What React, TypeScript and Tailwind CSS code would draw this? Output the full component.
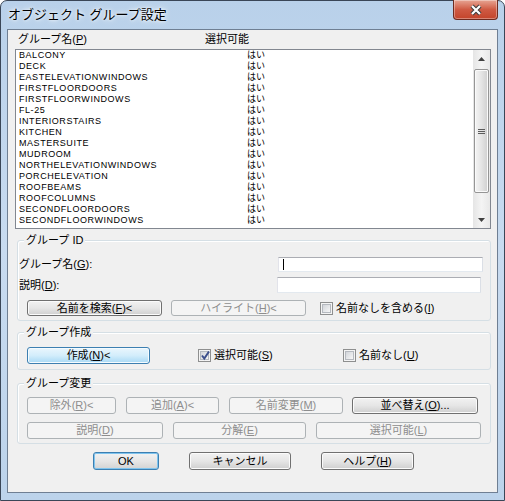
import React from "react";

const items = [
  "BALCONY",
  "DECK",
  "EASTELEVATIONWINDOWS",
  "FIRSTFLOORDOORS",
  "FIRSTFLOORWINDOWS",
  "FL-25",
  "INTERIORSTAIRS",
  "KITCHEN",
  "MASTERSUITE",
  "MUDROOM",
  "NORTHELEVATIONWINDOWS",
  "PORCHELEVATION",
  "ROOFBEAMS",
  "ROOFCOLUMNS",
  "SECONDFLOORDOORS",
  "SECONDFLOORWINDOWS",
];

type Kind = "normal" | "disabled" | "hot" | "default";

// mnemonic letter inside "(X)"
function Mn({ k }: { k: string }) {
  return (
    <>
      (<span className="underline underline-offset-[1px]">{k}</span>)
    </>
  );
}

function Btn({
  kind = "normal",
  className = "",
  children,
}: {
  kind?: Kind;
  className?: string;
  children: React.ReactNode;
}) {
  const look =
    kind === "disabled"
      ? "border-[#adb2b5] bg-[#f4f4f4] text-[#8d8d8d]"
      : kind === "hot"
        ? "border-[#3c7fb1] bg-linear-to-b from-[#eaf6fd] via-[#d3edfb] to-[#a7d9f5] text-black shadow-[inset_0_0_0_1px_#f4fbff]"
        : kind === "default"
          ? "border-[#3c7fb1] bg-linear-to-b from-[#f2f2f2] via-[#e6e6e6] to-[#d3d3d3] text-black shadow-[inset_0_0_0_1px_#7fc4ee]"
          : "border-[#707070] bg-linear-to-b from-[#f2f2f2] via-[#e6e6e6] to-[#cfcfcf] text-black shadow-[inset_0_0_0_1px_#fbfbfb]";
  return (
    <div
      className={`flex shrink-0 items-center justify-center rounded-[3px] border text-[11px] leading-[13px] ${look} ${className}`}
    >
      <span>{children}</span>
    </div>
  );
}

function Check({ checked = false }: { checked?: boolean }) {
  return (
    <span className="relative flex h-[13px] w-[13px] shrink-0 items-center justify-center border border-[#8e8f8f] bg-[#f4f4f4]">
      <span className="h-[9px] w-[9px] border border-[#b5b9bf] bg-linear-to-br from-[#d2d5da] to-[#f7f7f7]" />
      {checked && (
        <svg
          className="absolute left-[1px] top-[0px]"
          width="11"
          height="11"
          viewBox="0 0 11 11"
        >
          <path
            d="M2 5.5 L4.3 8.5 L9 1.5"
            fill="none"
            stroke="#3c4f8c"
            strokeWidth="2"
          />
        </svg>
      )}
    </span>
  );
}

function Input({ className = "", caret = false }: { className?: string; caret?: boolean }) {
  return (
    <div
      className={`flex shrink-0 items-center border border-[#abadb3] border-l-[#e2e3ea] border-r-[#dbdfe6] border-b-[#e3e9ef] bg-white pl-[4px] ${className}`}
    >
      {caret && <span className="h-[11px] w-[1px] bg-black" />}
    </div>
  );
}

function Group({
  title,
  className = "",
  children,
}: {
  title: string;
  className?: string;
  children: React.ReactNode;
}) {
  return (
    <div
      className={`relative ml-[9px] w-[474px] shrink-0 rounded-[3px] border border-[#d5dfe5] shadow-[inset_1px_1px_0_#ffffff] ${className}`}
    >
      <span className="absolute -top-[8px] left-[6px] bg-[#f0f0f0] px-[2px] text-[11px] leading-[14px]">
        {title}
      </span>
      {children}
    </div>
  );
}

function Arrow({ up }: { up?: boolean }) {
  return (
    <div className="flex h-[17px] items-center justify-center">
      <svg width="7" height="4" viewBox="0 0 7 4">
        <path d={up ? "M0 4 L3.5 0 L7 4 Z" : "M0 0 L7 0 L3.5 4 Z"} fill="#404040" />
      </svg>
    </div>
  );
}

export default function App() {
  return (
    <div className="h-[501px] w-[505px] font-['Liberation_Sans','Noto_Sans_CJK_JP',sans-serif] text-black">
      <div className="flex h-[501px] w-[505px] flex-col rounded-t-[7px] border border-[#3a4657] bg-linear-to-b from-[#b9d1ea] via-[#c8dbf0] to-[#bcd3eb] px-[6px] pb-[7px]">
        {/* title bar */}
        <div className="flex h-[28px] shrink-0 items-start justify-between">
          <div className="mt-[6px] pl-[1px] text-[13px] leading-[16px] [text-shadow:0_0_6px_#ffffff,0_0_3px_#ffffff]">
            オブジェクト グループ設定
          </div>
          <div className="-mt-[1px] flex h-[20px] w-[45px] items-center justify-center rounded-b-[4px] border border-t-0 border-[#6d2b20] bg-linear-to-b from-[#e6a493] via-[#cf5a43] to-[#c3432a] shadow-[inset_0_0_0_1px_rgba(255,255,255,0.35)]">
            <svg width="14" height="12" viewBox="0 0 14 12">
              <path d="M3 2 L11 10 M11 2 L3 10" stroke="#3b3b3b" strokeWidth="4.2" />
              <path d="M3 2 L11 10 M11 2 L3 10" stroke="#ffffff" strokeWidth="2.2" />
            </svg>
          </div>
        </div>

        {/* client area */}
        <div className="flex flex-1 flex-col border border-[#6f7f93] bg-[#f0f0f0]">
          {/* column header */}
          <div className="flex h-[19px] shrink-0 items-center text-[11px] leading-[13px]">
            <span className="w-[197px] pl-[10px]">
              グループ名<Mn k="P" />
            </span>
            <span>選択可能</span>
          </div>

          {/* list */}
          <div className="ml-[7px] flex h-[180px] w-[476px] shrink-0 border border-[#828790] bg-white">
            <div className="flex-1">
              {items.map((it) => (
                <div key={it} className="flex h-[11px] items-center text-[9px] leading-[11px]">
                  <span className="w-[231px] pl-[3px] tracking-[0.55px]">{it}</span>
                  <span>はい</span>
                </div>
              ))}
            </div>
            <div className="flex w-[17px] flex-col bg-linear-to-r from-[#e5e5e5] via-[#f4f4f4] to-[#e8e8e8]">
              <Arrow up />
              <div className="flex-1 px-[1px] pt-[2px]">
                <div className="flex h-[124px] items-center justify-center rounded-[2px] border border-[#959595] bg-linear-to-r from-[#f4f4f4] via-[#e4e4e4] to-[#cfcfcf] shadow-[inset_0_0_0_1px_#fafafa]">
                  <svg width="7" height="7" viewBox="0 0 7 7">
                    <path d="M0 1.5 H7 M0 3.5 H7 M0 5.5 H7" stroke="#5b5b5b" strokeWidth="1" />
                  </svg>
                </div>
              </div>
              <Arrow />
            </div>
          </div>

          {/* group id */}
          <Group title="グループ ID" className="mt-[11px] h-[81px]">
            <div className="mt-[15px] flex h-[16px] items-center text-[11px] leading-[13px]">
              <span className="w-[260px] pl-[1px]">
                グループ名<Mn k="G" />:
              </span>
              <Input className="h-[15px] w-[205px]" caret />
            </div>
            <div className="mt-[5px] flex h-[16px] items-center text-[11px] leading-[13px]">
              <span className="w-[259px] pl-[1px]">
                説明<Mn k="D" />:
              </span>
              <Input className="h-[16px] w-[204px]" />
            </div>
            <div className="mt-[7px] flex h-[16px] items-center">
              <Btn className="ml-[9px] h-[16px] w-[135px]">
                名前を検索<Mn k="F" />&lt;
              </Btn>
              <Btn kind="disabled" className="ml-[9px] h-[16px] w-[135px]">
                ハイライト<Mn k="H" />&lt;
              </Btn>
              <span className="ml-[14px] flex items-center gap-[3px] text-[11px] leading-[13px]">
                <Check />
                <span>
                  名前なしを含める<Mn k="I" />
                </span>
              </span>
            </div>
          </Group>

          {/* group create */}
          <Group title="グループ作成" className="mt-[11px] h-[38px]">
            <div className="mt-[14px] flex h-[17px] items-center">
              <Btn kind="hot" className="ml-[9px] h-[17px] w-[123px]">
                作成<Mn k="N" />&lt;
              </Btn>
              <span className="ml-[48px] flex w-[145px] items-center gap-[3px] text-[11px] leading-[13px]">
                <Check checked />
                <span>
                  選択可能<Mn k="S" />
                </span>
              </span>
              <span className="flex items-center gap-[3px] text-[11px] leading-[13px]">
                <Check />
                <span>
                  名前なし<Mn k="U" />
                </span>
              </span>
            </div>
          </Group>

          {/* group modify */}
          <Group title="グループ変更" className="mt-[13px] h-[61px]">
            <div className="mt-[13px] flex h-[17px] items-center">
              <Btn kind="disabled" className="ml-[9px] h-[17px] w-[89px]">
                除外<Mn k="R" />&lt;
              </Btn>
              <Btn kind="disabled" className="ml-[10px] h-[17px] w-[93px]">
                追加<Mn k="A" />&lt;
              </Btn>
              <Btn kind="disabled" className="ml-[10px] h-[17px] w-[114px]">
                名前変更<Mn k="M" />
              </Btn>
              <Btn className="ml-[9px] h-[17px] w-[126px]">
                並べ替え<Mn k="O" />...
              </Btn>
            </div>
            <div className="mt-[8px] flex h-[17px] items-center">
              <Btn kind="disabled" className="ml-[9px] h-[17px] w-[136px]">
                説明<Mn k="D" />
              </Btn>
              <Btn kind="disabled" className="ml-[10px] h-[17px] w-[133px]">
                分解<Mn k="E" />
              </Btn>
              <Btn kind="disabled" className="ml-[10px] h-[17px] w-[165px]">
                選択可能<Mn k="L" />
              </Btn>
            </div>
          </Group>

          {/* dialog buttons */}
          <div className="mt-[8px] flex h-[18px] shrink-0 items-center">
            <Btn kind="default" className="ml-[85px] h-[18px] w-[66px]">
              OK
            </Btn>
            <Btn className="ml-[30px] h-[18px] w-[102px]">キャンセル</Btn>
            <Btn className="ml-[30px] h-[18px] w-[93px]">
              ヘルプ<Mn k="H" />
            </Btn>
          </div>
        </div>
      </div>
    </div>
  );
}
